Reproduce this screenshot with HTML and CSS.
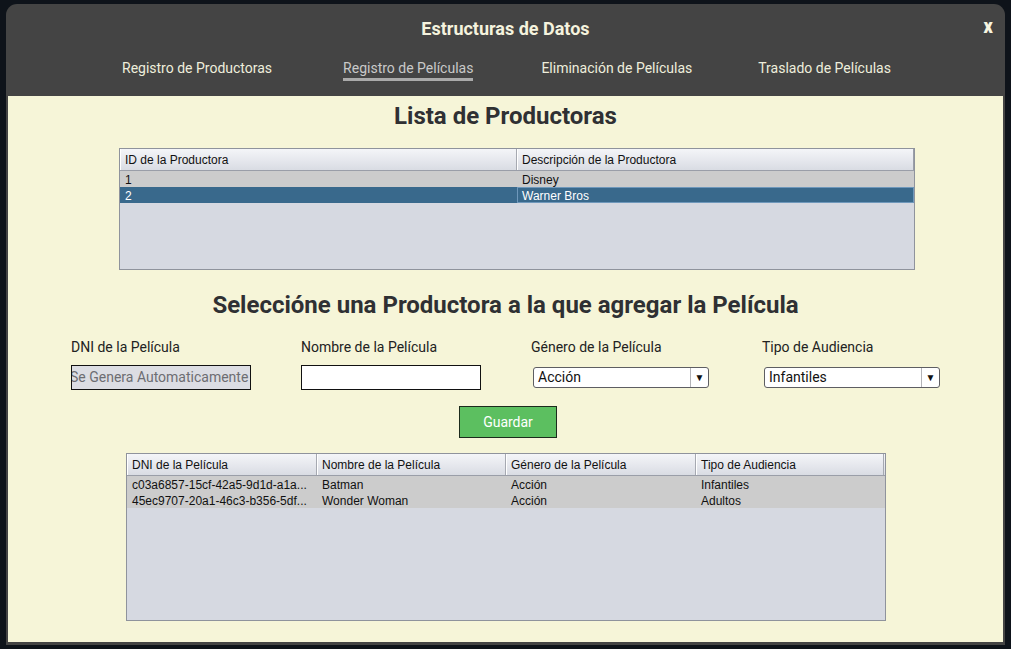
FILE: index.html
```html
<!DOCTYPE html>
<html lang="es">
<head>
<meta charset="utf-8">
<title>Estructuras de Datos</title>
<link rel="stylesheet" href="styles.css">
</head>
<body>
<div class="window">
  <header class="header">
    <div class="title">Estructuras de Datos</div>
    <button class="close">x</button>
    <nav class="nav">
      <a class="nav-item n1">Registro de Productoras</a>
      <a class="nav-item n2 active">Registro de Películas</a>
      <a class="nav-item n3">Eliminación de Películas</a>
      <a class="nav-item n4">Traslado de Películas</a>
    </nav>
  </header>
  <main class="content">
    <h1 class="h-lista">Lista de Productoras</h1>
    <div class="table t1">
      <div class="thead">
        <div class="th">ID de la Productora</div>
        <div class="th">Descripción de la Productora</div>
      </div>
      <div class="tr">
        <div class="td">1</div>
        <div class="td">Disney</div>
      </div>
      <div class="tr selected">
        <div class="td">2</div>
        <div class="td focus">Warner Bros</div>
      </div>
    </div>

    <h2 class="h-sel">Seleccióne una Productora a la que agregar la Película</h2>

    <div class="form">
      <div class="field">
        <label class="lbl">DNI de la Película</label>
        <div class="input disabled">Se Genera Automaticamente</div>
      </div>
      <div class="field">
        <label class="lbl">Nombre de la Película</label>
        <div class="input"></div>
      </div>
      <div class="field">
        <label class="lbl">Género de la Película</label>
        <div class="select"><span class="sel-text">Acción</span><span class="sel-arrow">▼</span></div>
      </div>
      <div class="field">
        <label class="lbl">Tipo de Audiencia</label>
        <div class="select"><span class="sel-text">Infantiles</span><span class="sel-arrow">▼</span></div>
      </div>
    </div>

    <button class="btn">Guardar</button>

    <div class="table t2">
      <div class="thead">
        <div class="th">DNI de la Película</div>
        <div class="th">Nombre de la Película</div>
        <div class="th">Género de la Película</div>
        <div class="th">Tipo de Audiencia</div>
      </div>
      <div class="tr">
        <div class="td">c03a6857-15cf-42a5-9d1d-a1a...</div>
        <div class="td">Batman</div>
        <div class="td">Acción</div>
        <div class="td">Infantiles</div>
      </div>
      <div class="tr">
        <div class="td">45ec9707-20a1-46c3-b356-5df...</div>
        <div class="td">Wonder Woman</div>
        <div class="td">Acción</div>
        <div class="td">Adultos</div>
      </div>
    </div>
  </main>
</div>
</body>
</html>
```
FILE: styles.css
```css
* { box-sizing: border-box; }
html, body { margin: 0; padding: 0; }
body {
  background: #0e131a;
  width: 1011px;
  height: 649px;
  overflow: hidden;
  padding: 4px 6px 0 6px;
}
.window {
  width: 999px;
  height: 641px;
  background: #444444;
  border-radius: 11px 11px 0 0;
  padding: 0 2px 3px 2px;
  display: flex;
  flex-direction: column;
}
.header {
  position: relative;
  height: 92px;
  flex: none;
  color: #f2f0dc;
  font-family: Roboto, "Noto Sans", sans-serif;
}
.title {
  text-align: center;
  font-weight: 700;
  font-size: 18px;
  letter-spacing: 0;
  line-height: 22px;
  padding-top: 14px;
  color: #f5f3de;
}
.close {
  position: absolute;
  right: 10px;
  top: 11px;
  background: none;
  border: none;
  padding: 0;
  color: #f7f5e0;
  font-family: Roboto, sans-serif;
  font-weight: 900;
  font-size: 20px;
  line-height: 22px;
  transform: scaleX(0.9);
}
.nav {
  display: flex;
  margin-top: 19px;
  padding-left: 114px;
  font-size: 14px;
  letter-spacing: 0;
  line-height: 18px;
}
.nav-item {
  color: #eeeedc;
  padding-bottom: 1px;
}
.n2 { margin-left: 71px; }
.n3 { margin-left: 68px; }
.n4 { margin-left: 66px; }
.nav-item.active {
  color: #c9c9c9;
  border-bottom: 3px solid #aaaaaa;
}
.content {
  flex: 1;
  background: #f6f5d8;
  display: flex;
  flex-direction: column;
  align-items: flex-start;
}
.h-lista {
  margin: 6px 0 0 0;
  align-self: center;
  font-family: Roboto, sans-serif;
  font-weight: 700;
  font-size: 24px;
  line-height: 28px;
  color: #2f3033;
}
.table {
  background: #d6d9e1;
  border: 1px solid #8f939c;
  font-family: "Liberation Sans", Arial, sans-serif;
  font-size: 12px;
  color: #111;
}
.t1 {
  margin: 18px 0 0 111px;
  width: 796px;
  height: 122px;
}
.t1 .thead, .t1 .tr { display: grid; grid-template-columns: 397px 1fr; }
.t2 {
  margin: 15px 0 0 118px;
  width: 760px;
  height: 168px;
}
.t2 .thead, .t2 .tr { display: grid; grid-template-columns: 190px 189px 190px 188px; }
.thead {
  height: 22px;
  background: linear-gradient(#f4f5f8, #e4e6ec 60%, #d9dce3);
  border-bottom: 1px solid #9a9ea8;
}
.th {
  line-height: 21px;
  padding: 1px 0 0 5px;
  border-right: 1px solid #a6a9b1;
  box-shadow: inset 1px 0 0 #ffffff;
  white-space: nowrap;
  overflow: hidden;
}
.t1 .th:last-child { border-right: 1px solid #9a9ea8; }
.tr {
  height: 16px;
  background: #cccccc;
}
.td {
  line-height: 16px;
  padding: 1px 0 0 5px;
  white-space: nowrap;
  overflow: hidden;
}
.tr.selected {
  background: #39698c;
  color: #ffffff;
}
.td.focus {
  border: 1px solid #6f98bb;
  line-height: 14px;
  padding: 1px 0 0 4px;
}
.h-sel {
  margin: 19px 0 0 0;
  align-self: center;
  font-family: Roboto, sans-serif;
  font-weight: 700;
  font-size: 24px;
  line-height: 32px;
  color: #2f3033;
}
.form {
  margin: 17px 0 0 63px;
  display: grid;
  grid-template-columns: 230px 230px 231px 230px;
  font-family: Roboto, sans-serif;
}
.lbl {
  display: block;
  font-size: 14px;
  line-height: 18px;
  color: #222222;
}
.input {
  margin-top: 9px;
  width: 180px;
  height: 25px;
  border: 1px solid #111;
  background: #ffffff;
  font-size: 14px;
  line-height: 23px;
  overflow: hidden;
  white-space: nowrap;
}
.input.disabled {
  background: #dcdde3;
  color: #6d6d72;
  text-indent: -2px;
}
.select {
  margin: 11px 0 0 2px;
  width: 176px;
  height: 21px;
  border: 1px solid #5e5e62;
  border-radius: 3px;
  background: #ffffff;
  display: flex;
  font-size: 14px;
  color: #111;
}
.sel-text {
  flex: 1;
  line-height: 19px;
  padding-left: 4px;
}
.sel-arrow {
  width: 18px;
  border-left: 1px solid #b4b4b8;
  font-size: 10px;
  line-height: 19px;
  text-align: center;
  color: #111;
}
.btn {
  margin: 16px 0 0 451px;
  width: 98px;
  height: 32px;
  background: #5cbf60;
  border: 1px solid #1c2a1c;
  color: #ffffff;
  font-family: Roboto, sans-serif;
  font-size: 14px;
  padding: 0;
}
```
